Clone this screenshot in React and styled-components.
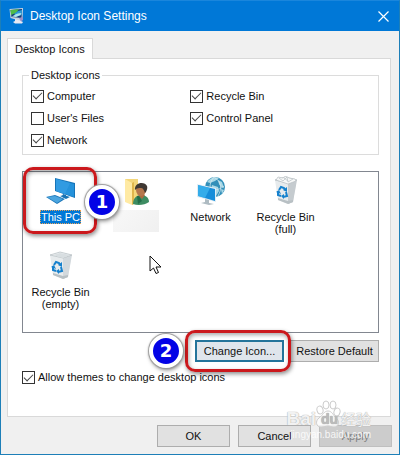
import React from "react";
import styled, { createGlobalStyle, css } from "styled-components";

const GlobalStyle = createGlobalStyle`
  *, *::before, *::after { box-sizing: border-box; }
  body {
    margin: 0;
    font-family: "Liberation Sans", Arial, sans-serif;
    font-size: 11px;
    line-height: 13px;
    color: #111;
  }
`;

const Window = styled.div`
  position: relative;
  display: flex;
  flex-direction: column;
  min-height: 100vh;
  background: #f0f0f0;
  border: 1px solid #1d7fb8;
  border-top-color: #1a86dc;
`;

const TitleBar = styled.header`
  display: flex;
  align-items: center;
  gap: 5px;
  height: 30px;
  padding: 0 10px 0 8px;
  background: #0078d7;
  color: #fff;
`;

const Title = styled.h1`
  flex: 1;
  margin: 0;
  font-size: 12px;
  font-weight: 400;
  line-height: 16px;
`;

const CloseButton = styled.button`
  display: flex;
  padding: 0;
  border: 0;
  background: none;
  color: #fff;
`;

const Body = styled.main`
  flex: 1;
  display: flex;
  flex-direction: column;
  padding: 7px 7px 7px 6px;
`;

const TabList = styled.div`
  display: flex;
`;

const Tab = styled.button`
  z-index: 1;
  height: 21px;
  margin-bottom: -1px;
  padding: 0 7px;
  border: 1px solid #d9d9d9;
  border-bottom: 0;
  background: #fff;
  font: inherit;
  color: inherit;
`;

const Panel = styled.section`
  flex: 1;
  display: flex;
  flex-direction: column;
  margin-right: 1px;
  padding: 10px 11px 32px 14px;
  border: 1px solid #d9d9d9;
  background: #fff;
`;

const Group = styled.fieldset`
  margin: 0;
  padding: 3px 8px;
  border: 1px solid #dcdcdc;
`;

const Legend = styled.legend`
  margin-left: -2px;
  padding: 0 2px;
`;

const OptionGrid = styled.div`
  display: grid;
  grid-template-columns: 47% 1fr;
  grid-auto-rows: 22px;
  align-items: center;
`;

const Option = styled.label`
  display: flex;
  align-items: center;
  gap: 3px;
`;

const Tick = styled.input.attrs({ type: "checkbox" })`
  appearance: none;
  display: grid;
  place-content: center;
  width: 13px;
  height: 13px;
  margin: 0;
  border: 1px solid #333;
  background: #fff;

  &:checked::before {
    content: "";
    width: 9px;
    height: 5px;
    margin-bottom: 3px;
    border: solid #444;
    border-width: 0 0 1px 1px;
    transform: rotate(-45deg);
  }
`;

const IconList = styled.div`
  position: relative;
  flex: 1;
  display: grid;
  grid-template-columns: repeat(auto-fill, 75px);
  grid-auto-rows: 75px;
  margin: 16px 0 7px;
  border: 1px solid #828790;
`;

const IconItem = styled.div`
  position: relative;
  display: flex;
  flex-direction: column;
  align-items: center;
  gap: 2px;
  padding-top: 4px;
  text-align: center;
`;

const IconLabel = styled.span`
  border: 1px solid transparent;
  line-height: 12px;
  ${(p) =>
    p.$selected &&
    css`
      border: 1px dotted #e8a25a;
      background: #0078d7;
      color: #fff;
    `}
`;

const HiddenName = styled.span`
  width: 46px;
  height: 22px;
  background: linear-gradient(135deg, #f8f8f8, #f0f0f0);
`;

const Pointer = styled.svg`
  position: absolute;
  left: 126px;
  top: 83px;
`;

const ActionRow = styled.div`
  display: flex;
  justify-content: flex-end;
  gap: 6px;
  margin-bottom: 9px;
`;

const FooterRow = styled.footer`
  display: flex;
  justify-content: flex-end;
  gap: 8px;
  padding-top: 8px;
`;

const PushButton = styled.button`
  width: ${(p) => (p.$wide ? 89 : 73)}px;
  height: 22px;
  padding: 0;
  border: 1px solid #adadad;
  background: #e1e1e1;
  font: inherit;
  color: #111;
  white-space: nowrap;

  &:disabled {
    border-color: #bfbfbf;
    background: #ccc;
    color: #838383;
  }

  ${(p) =>
    p.$focused &&
    css`
      border: 2px solid #24749b;
      background: #dfe5ec;
    `}
`;

const Highlighted = styled.div`
  position: relative;
  display: flex;
`;

const Ring = styled.div`
  position: absolute;
  inset: ${(p) => p.$inset};
  z-index: 1;
  border: 3px solid #cb181c;
  border-radius: 10px;
  box-shadow: 1px 2px 4px rgba(0, 0, 0, 0.45),
    inset 1px 2px 4px rgba(0, 0, 0, 0.35);
  pointer-events: none;
`;

const Badge = styled.span`
  position: absolute;
  left: ${(p) => p.$left}px;
  top: ${(p) => p.$top}px;
  z-index: 2;
  display: grid;
  place-content: center;
  width: 34px;
  height: 34px;
  border: 4px solid #fff;
  border-radius: 50%;
  background: #0303e6;
  box-shadow: 0 0 1px 1px #999, 1px 2px 4px rgba(0, 0, 0, 0.5);
  color: #fff;
  font: bold 18px/20px "DejaVu Sans", Verdana, sans-serif;
`;

const Watermark = styled.div`
  position: absolute;
  right: 28px;
  bottom: 13px;
  z-index: 3;
  display: flex;
  flex-direction: column;
  align-items: flex-end;
  color: rgba(255, 255, 255, 0.85);
  text-shadow: 0 0 1px #aaa, 0 0 1px #bbb;
  pointer-events: none;
`;

const Brand = styled.div`
  display: flex;
  align-items: flex-end;
  font: bold 19px/18px "Liberation Sans", Arial, sans-serif;
`;

const BrandHan = styled.span`
  font: 15px/18px "Noto Sans CJK SC", sans-serif;
`;

const Site = styled.span`
  font-size: 10px;
  line-height: 13px;
  text-shadow: none;
`;

function MonitorGlobe() {
  return (
    <svg width="16" height="16" viewBox="0 0 16 16" aria-hidden="true">
      <path d="M6 10h5l1 3 2 1-1 1.500H6L4 14l2-1z" fill="#e9e9f2" />
      <path d="M.5 1L14 0l-.5 11-3 1.500L1.500 10z" fill="#c9d3df" />
      <path d="M1.500 2L13 1l-.5 9L2.500 9z" fill="#163c78" />
      <path d="M1.500 2L10 1.300 7 5 2 7z" fill="#4fbb48" />
      <path d="M5 6l4-3 4-1-.3 5-5 1.500z" fill="#2c9bd8" />
      <path d="M2.300 8.500C5 8 7 5 12.500 5l-1 2L7 9z" fill="#aee6ed" />
      <path d="M10 10l4-1v3l-2 1.500z" fill="#9a90c8" />
    </svg>
  );
}

function ComputerIcon() {
  return (
    <svg width="32" height="32" viewBox="0 0 32 32" aria-hidden="true">
      <path d="M10 2l20 5v15l-20-7z" fill="#1674b8" />
      <path d="M11 3l18 5v13l-18-6z" fill="#2592db" />
      <path d="M11 3l14 4-5 11-9-3z" fill="#3ba2e6" opacity=".6" />
      <path d="M18 18l3 1v3l-4-1z" fill="#146cac" />
      <path d="M15 20l4-1 6 2-4 2z" fill="#1874b5" />
      <path d="M1 21l9-2 10 4-8 5z" fill="#1b75b8" />
      <path d="M2 21l8-1 8 3-6 4z" fill="#4ba5df" />
    </svg>
  );
}

function UserFolderIcon() {
  return (
    <svg width="32" height="32" viewBox="0 0 32 32" aria-hidden="true">
      <path d="M5 3h13v22l-4 3-9-3z" fill="#f4d77b" />
      <path d="M5 3l7 4v22l-7-3z" fill="#ffeaa4" />
      <path d="M12 7l2-1v22l-2 1z" fill="#dfb64c" />
      <path d="M13 28c0-6 4-9 8-9 5 0 8 3 8 7-4 3-11 4-16 2z" fill="#3d8c62" />
      <path d="M18 19l4 4 3-4-4-2z" fill="#ad6a3f" />
      <path d="M19 20l3 5-4 3-1-8z" fill="#226e49" />
      <ellipse cx="21" cy="14" rx="5" ry="6" fill="#b5774d" />
      <path d="M15 14c-1-8 10-9 12-4 1 3-1 6-2 7-1-3-2-5-4-5-2 0-4 0-6 2z" fill="#3f3833" />
    </svg>
  );
}

function NetworkIcon() {
  return (
    <svg width="32" height="32" viewBox="0 0 32 32" aria-hidden="true">
      <circle cx="20" cy="11" r="10" fill="#328fb9" />
      <path d="M12 6c3-4 8-6 12-4l-4 3-5 2zM23 4l4 2 2 6-3-1-2-3zM17 9l6 2 1 4-3 5-2-5-3-2zM26 13l3 1-2 4z" fill="#a9d8e6" />
      <path d="M11 11c5 4 12 4 18-1M19 1c-6 7-5 14 2 20M19 1c8 5 8 12 4 19" fill="none" stroke="#dcecf2" strokeWidth=".7" />
      <path d="M2 8l19 4v14L2 21z" fill="#dfedf5" />
      <path d="M3 9l17 4v12L3 20z" fill="#168dda" />
      <path d="M3 9l12 3-5 10-7-2z" fill="#45bdf3" opacity=".65" />
      <path d="M10 23l4 1v3l5 1-5 1-8-2 4-1z" fill="#aebbc2" />
    </svg>
  );
}

function BinIcon({ full }) {
  return (
    <svg width="32" height="32" viewBox="0 0 32 32" aria-hidden="true">
      <path d="M5 4l13 3h8l-3 19-5 2-10-4z" fill="#e7ebed" />
      <path d="M18 7l9-3-4 22-5 2z" fill={full ? "#c5cbcf" : "#d3d9dd"} />
      <path d="M5 4l10-3 12 3-9 3z" fill="#edf0f2" stroke="#b1babf" strokeWidth=".7" />
      <path d="M8 4l10 3 7-3-10-2z" fill="#d8dee1" />
      {full && (
        <>
          <path d="M6 4l2-3 5 1 3-2 3 2 6 1 1 2-8 3z" fill="#f7f8f8" stroke="#b8bfc3" strokeWidth=".7" />
          <path d="M9 2l4 3 4-4 1 5 5-3M14 2l4 3" fill="none" stroke="#bec5c9" strokeWidth=".8" />
        </>
      )}
      <path d="M8 22l10 3 5-1v2l-5 2-10-4z" fill="#b8c0c4" />
      <g fill="none" stroke="#1681cd" strokeWidth="2">
        <path d="M9 14l2-3 3 1 1 2" />
        <path d="M16 16l1 4-4 1" />
        <path d="M11 20l-3-1v-4" />
      </g>
      <path d="M17 11v5l-4-2zM14 18v5l-3-3zM6 16l3-2 2 4z" fill="#1681cd" />
    </svg>
  );
}

function Paw() {
  return (
    <svg width="25" height="28" viewBox="0 0 25 28" aria-hidden="true">
      <g fill="#fff" fillOpacity=".75" stroke="#ccc">
        <ellipse cx="4" cy="10" rx="3" ry="4" transform="rotate(-15 4 10)" />
        <ellipse cx="10" cy="5" rx="3" ry="4" />
        <ellipse cx="17" cy="5" rx="3" ry="4" />
        <ellipse cx="21" cy="12" rx="3" ry="4" transform="rotate(15 21 12)" />
        <path d="M12 11c4 0 5 4 8 7 4 3 3 9-2 9-3 0-4-1-6-1s-4 1-7 1c-5 0-6-6-2-9 4-3 5-7 9-7z" />
      </g>
      <text x="5" y="24" fontFamily="Liberation Sans" fontSize="14" fontWeight="700" fill="#bbb">du</text>
    </svg>
  );
}

const options = [
  ["Computer", true],
  ["Recycle Bin", true],
  ["User's Files", false],
  ["Control Panel", true],
  ["Network", true],
];

export default function App() {
  return (
    <>
      <GlobalStyle />
      <Window>
        <TitleBar>
          <MonitorGlobe />
          <Title>Desktop Icon Settings</Title>
          <CloseButton aria-label="Close">
            <svg width="11" height="11" viewBox="0 0 11 11" aria-hidden="true">
              <path d="M.5.5l10 10M10.500.5l-10 10" stroke="currentColor" strokeWidth="1.2" />
            </svg>
          </CloseButton>
        </TitleBar>
        <Body>
          <TabList role="tablist">
            <Tab role="tab" aria-selected="true">Desktop Icons</Tab>
          </TabList>
          <Panel role="tabpanel">
            <Group>
              <Legend>Desktop icons</Legend>
              <OptionGrid>
                {options.map(([name, on]) => (
                  <Option key={name}>
                    <Tick defaultChecked={on} />
                    {name}
                  </Option>
                ))}
              </OptionGrid>
            </Group>
            <IconList>
              <IconItem>
                <ComputerIcon />
                <IconLabel $selected>This PC</IconLabel>
                <Ring $inset="-5px 1px 13px 0" />
                <Badge $left={62} $top={13}>1</Badge>
              </IconItem>
              <IconItem>
                <UserFolderIcon />
                <HiddenName />
              </IconItem>
              <IconItem>
                <NetworkIcon />
                <IconLabel>Network</IconLabel>
              </IconItem>
              <IconItem>
                <BinIcon full />
                <IconLabel>Recycle Bin<br />(full)</IconLabel>
              </IconItem>
              <IconItem>
                <BinIcon />
                <IconLabel>Recycle Bin<br />(empty)</IconLabel>
              </IconItem>
              <Pointer width="13" height="20" viewBox="0 0 13 20" aria-hidden="true">
                <path d="M1 1v15l3.500-3 2.500 5.500 2.500-1-2.500-5.500h5z" fill="#fff" stroke="#111" />
              </Pointer>
            </IconList>
            <ActionRow>
              <Highlighted>
                <PushButton $wide $focused>Change Icon...</PushButton>
                <Ring $inset="-10px -7px -10px -10px" />
                <Badge $left={-46} $top={-6}>2</Badge>
              </Highlighted>
              <PushButton $wide>Restore Default</PushButton>
            </ActionRow>
            <Option>
              <Tick defaultChecked />
              Allow themes to change desktop icons
            </Option>
          </Panel>
          <FooterRow>
            <PushButton>OK</PushButton>
            <PushButton>Cancel</PushButton>
            <PushButton disabled>Apply</PushButton>
          </FooterRow>
        </Body>
        <Watermark>
          <Brand>
            Bai<Paw /><BrandHan>经验</BrandHan>
          </Brand>
          <Site>jingyan.baidu.com</Site>
        </Watermark>
      </Window>
    </>
  );
}
